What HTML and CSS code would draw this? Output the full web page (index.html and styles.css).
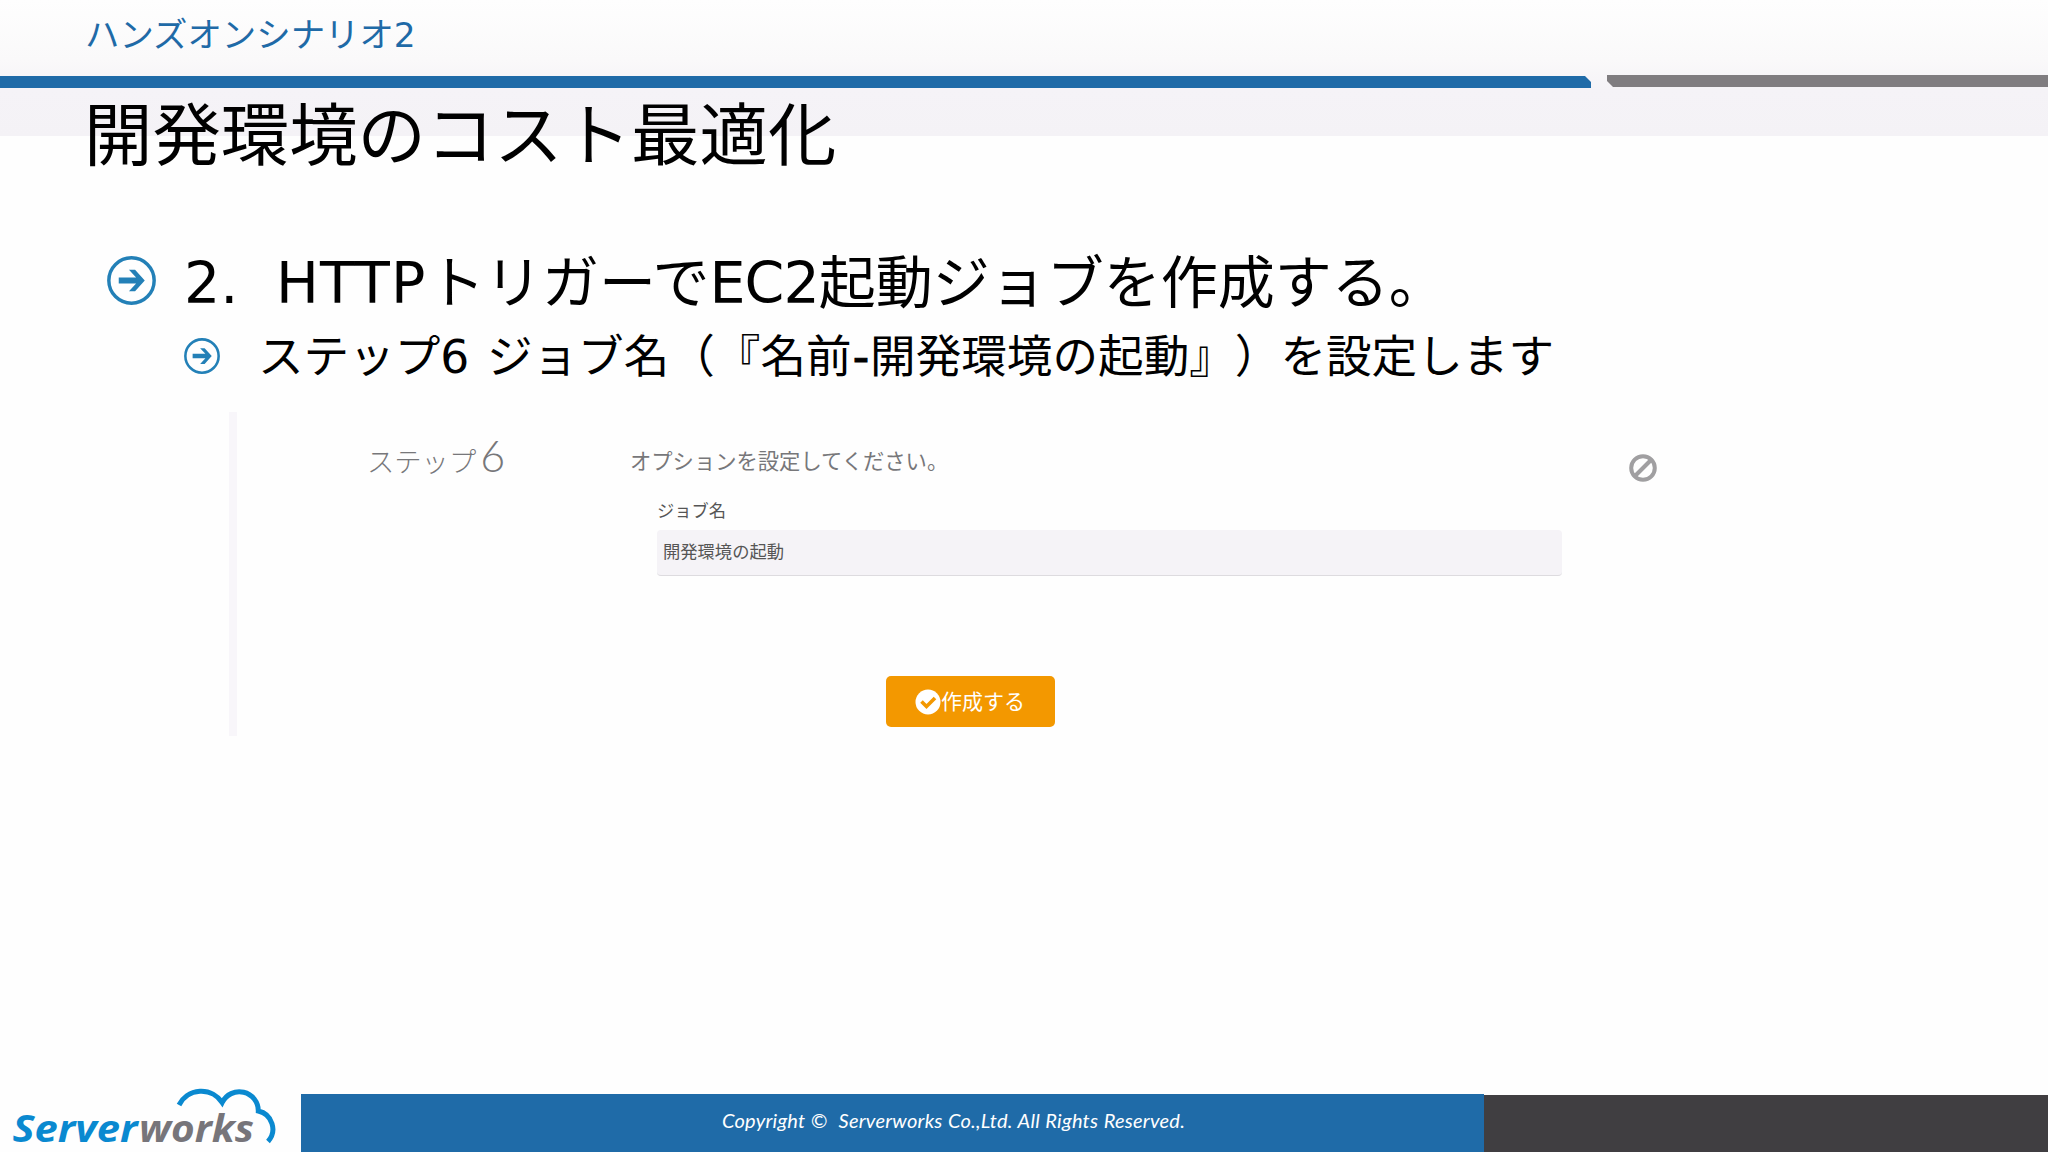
FILE: index.html
```html
<!DOCTYPE html>
<html lang="ja">
<head>
    <meta charset="UTF-8">
    <meta name="viewport" content="width=device-width, initial-scale=1.0">
    <title>開発環境のコスト最適化</title>
    <link rel="stylesheet" href="styles.css">
</head>
<body>

    <div class="slide">
        <header>
            <p class="scenario">ハンズオンシナリオ2</p>
            <div class="bars">
                <div class="bar-blue"></div>
                <div class="bar-gray"></div>
            </div>
            <h1>開発環境のコスト最適化</h1>
        </header>

        <main>
            <!-- Bullets -->
            <div class="bullet">
                <svg class="arrow" viewBox="0 0 48 48">
                    <circle cx="24" cy="24" r="22.2" />
                    <path d="M11.5 21H28.5L21.5 13.5H27.5L37 24L27.5 34.5H21.5L28.5 27H11.5Z" />
                </svg>
                <h2><span class="num">2.</span><span class="http">HTTP</span>トリガーで<span class="ec2">EC2</span>起動ジョブを作成する。</h2>
            </div>
            <div class="bullet sub">
                <svg class="arrow" viewBox="0 0 48 48">
                    <circle cx="24" cy="24" r="22.2" />
                    <path d="M11.5 21H28.5L21.5 13.5H27.5L37 24L27.5 34.5H21.5L28.5 27H11.5Z" />
                </svg>
                <h3>ステップ6 ジョブ名（『名前<span class="dash">-</span>開発環境の起動』）を設定します</h3>
            </div>

            <!-- Job form -->
            <section class="panel">
                <div class="step">ステップ<span>6</span></div>
                <div class="form">
                    <p class="lead">オプションを設定してください。</p>
                    <div class="field">
                        <div class="label">ジョブ名</div>
                        <div class="input">開発環境の起動</div>
                    </div>
                    <div class="button">
                        <svg viewBox="0 0 26 26">
                            <circle cx="13" cy="13" r="12.5" fill="#fff" />
                            <path d="M6.5 12.5L11.5 17.5L20 9" fill="none" stroke="#f39800" stroke-width="3.6" />
                        </svg><span>作成する</span>
                    </div>
                </div>
                <svg class="ban" viewBox="0 0 28 28">
                    <circle cx="14" cy="14" r="11.8" />
                    <path d="M6 22L22 6" />
                </svg>
            </section>
        </main>

        <footer>
            <svg class="logo" viewBox="0 0 301 82">
                <text x="12.5" y="71.5" textLength="125" lengthAdjust="spacingAndGlyphs" fill="#0a89d0">Server</text>
                <text x="139" y="71.5" textLength="115" lengthAdjust="spacingAndGlyphs" fill="#77757a">works</text>
                <path d="M179 35A25 25 0 0 1 222.2 32.5A19 19 0 0 1 258.3 41A18.5 18.5 0 0 1 268 71.5" />
            </svg>
            <div class="copyright">Copyright ©&nbsp; Serverworks Co.,Ltd. All Rights Reserved.</div>
            <div class="corner"></div>
        </footer>
    </div>

</body>
</html>
```

FILE: styles.css
```css
body {
    margin: 0;
    font-family: "DejaVu Sans", "Noto Sans CJK JP", sans-serif;
    color: #000;
    text-spacing-trim: space-all;
}
h1, h2, h3, p {
    margin: 0;
    font-weight: 400;
    white-space: nowrap;
}
.slide {
    width: 2048px;
    height: 1152px;
    overflow: hidden;
    display: flex;
    flex-direction: column;
    background: linear-gradient(#fefefe 0, #faf9fa 60px, #f5f3f7 90px, #f4f2f6 136px, #fefefe 136px);
}
header {
    height: 236px;
}
.scenario {
    height: 75px;
    padding-left: 85px;
    font-size: 34.4px;
    line-height: 71px;
    color: #1f6aa7;
    box-sizing: border-box;
}
.bars {
    display: flex;
    gap: 16px;
}
.bar-blue {
    width: 1591px;
    height: 12px;
    margin-top: 1px;
    background-color: #1f6ba8;
    clip-path: polygon(0 0, 1585px 0, 100% 6px, 100% 100%, 0 100%);
}
.bar-gray {
    flex: 1;
    height: 12px;
    background-color: #807d80;
    clip-path: polygon(0 0, 100% 0, 100% 100%, 6px 100%, 0 6px);
}
h1 {
    padding-left: 84px;
    font-size: 68.4px;
    line-height: 98px;
}
main {
    flex: 1;
}
.bullet {
    display: flex;
    align-items: center;
    height: 88px;
    padding-left: 107px;
}
.arrow {
    width: 49px;
    height: 49px;
    fill: #2380b7;
}
.arrow circle {
    fill: none;
    stroke: #2380b7;
    stroke-width: 3.4;
}
h2 {
    margin-left: 28px;
    padding-top: 5px;
    font-size: 57px;
    line-height: 88px;
}
.num {
    display: inline-block;
    width: 92px;
}
.http {
    display: inline-block;
    width: 152px;
    letter-spacing: 1.2px;
}
.ec2 {
    letter-spacing: -1px;
}
.sub {
    height: 64px;
    padding-left: 184px;
}
.sub .arrow {
    width: 36px;
    height: 36px;
}
h3 {
    margin-left: 38px;
    padding-top: 3px;
    font-size: 45.6px;
    line-height: 64px;
    word-spacing: 3px;
}
.dash {
    margin: 0 1px;
    -webkit-text-stroke: 1px #000;
}
.panel {
    display: flex;
    align-items: flex-start;
    height: 324px;
    margin: 24px 0 0 229px;
    border-left: 8px solid #f8f6fa;
    font-family: "Noto Sans CJK JP", sans-serif;
    color: #77777a;
}
.step {
    width: 263px;
    margin-left: 130px;
    font-size: 27.3px;
    font-weight: 300;
    line-height: 87px;
    white-space: nowrap;
}
.step span {
    margin-left: 4px;
    font-family: Lato, sans-serif;
    font-size: 43px;
}
.form {
    width: 932px;
}
.lead {
    height: 84px;
    font-size: 21.3px;
    line-height: 96px;
}
.field {
    margin-left: 27px;
    font-size: 17.3px;
    color: #555;
}
.label {
    height: 34px;
    line-height: 28px;
}
.input {
    height: 46px;
    padding-left: 6px;
    border-bottom: 1px solid #dddbdf;
    border-radius: 4px;
    background-color: #f5f3f7;
    line-height: 42px;
    box-sizing: border-box;
}
.button {
    display: flex;
    align-items: center;
    width: 169px;
    height: 51px;
    margin: 100px 0 0 256px;
    padding-left: 29px;
    border-radius: 5px;
    background-color: #f39800;
    color: #fff;
    font-size: 21px;
    box-sizing: border-box;
    white-space: nowrap;
}
.button span {
    padding-bottom: 3px;
}
.button svg {
    width: 26px;
    height: 26px;
}
.ban {
    width: 28px;
    height: 28px;
    margin: 42px 0 0 67px;
    fill: none;
    stroke: #a09fa1;
    stroke-width: 4;
}
footer {
    display: flex;
    align-items: flex-end;
    height: 82px;
}
.logo {
    width: 301px;
    height: 82px;
    font-family: "Open Sans", sans-serif;
    font-size: 37px;
    font-weight: 700;
    font-style: italic;
}
.logo path {
    fill: none;
    stroke: #0a89d0;
    stroke-width: 5;
}
.copyright {
    width: 1183px;
    height: 58px;
    padding-left: 421px;
    background-color: #1f6ba8;
    color: #fff;
    font-family: Lato, sans-serif;
    font-size: 20px;
    font-style: italic;
    line-height: 53px;
    letter-spacing: 0.25px;
    word-spacing: 0.5px;
    white-space: nowrap;
    box-sizing: border-box;
}
.corner {
    flex: 1;
    height: 57px;
    background-color: #403e41;
}
```
